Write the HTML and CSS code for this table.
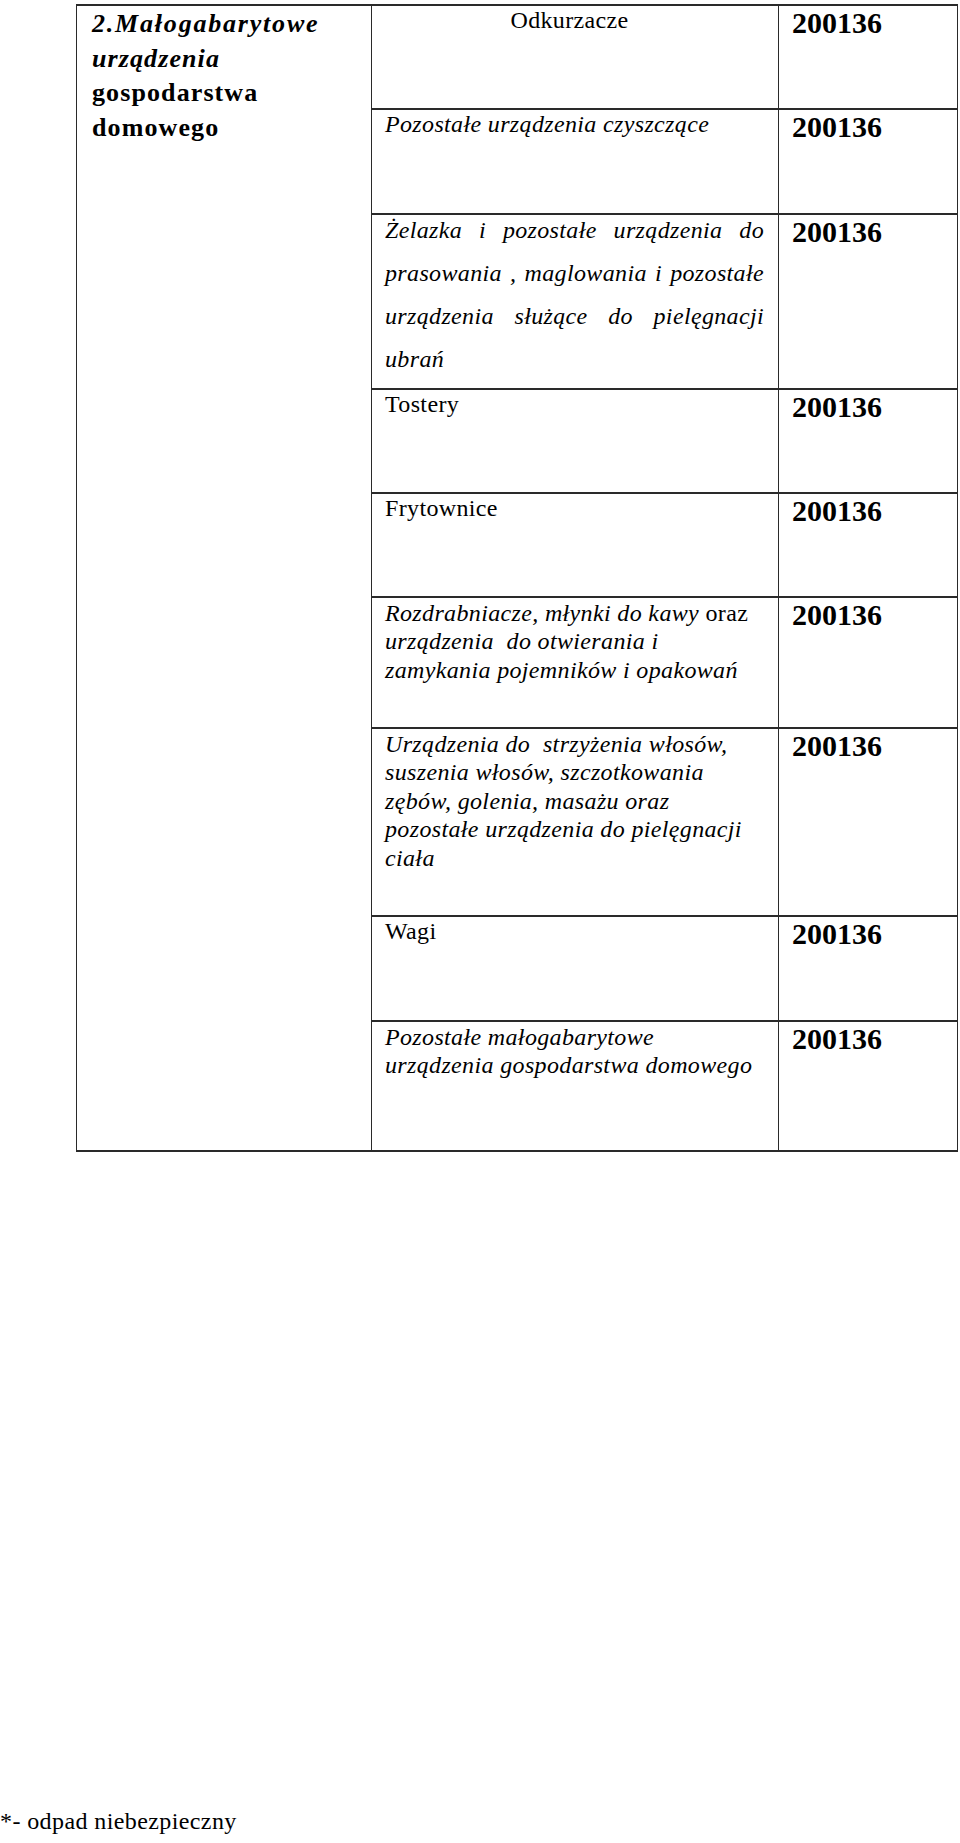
FILE: index.html
```html
<!DOCTYPE html>
<html lang="pl">
<head>
<meta charset="utf-8">
<title>Małogabarytowe urządzenia gospodarstwa domowego</title>
<link rel="stylesheet" href="styles.css">
</head>
<body>
<div class="page">
  <div class="sheet">
    <div class="cat">
      <em><span class="cat-lead">2.Małogabarytowe</span><br>urządzenia</em><br>
      gospodarstwa<br>domowego
    </div>

    <div class="name first center">Odkurzacze</div>
    <div class="code first">200136</div>

    <div class="name"><em>Pozostałe urządzenia czyszczące</em></div>
    <div class="code">200136</div>

    <div class="name just">
      <em class="jl">Żelazka i pozostałe urządzenia do</em>
      <em class="jl">prasowania , maglowania i pozostałe</em>
      <em class="jl">urządzenia służące do pielęgnacji</em>
      <em class="jl last">ubrań</em>
    </div>
    <div class="code">200136</div>

    <div class="name">Tostery</div>
    <div class="code">200136</div>

    <div class="name">Frytownice</div>
    <div class="code">200136</div>

    <div class="name tight"><em>Rozdrabniacze, młynki do kawy</em> oraz<br><em>urządzenia&nbsp; do otwierania i<br>zamykania pojemników i opakowań</em></div>
    <div class="code">200136</div>

    <div class="name tight"><em>Urządzenia do&nbsp; strzyżenia włosów,<br>suszenia włosów, szczotkowania<br>zębów, golenia, masażu oraz<br>pozostałe urządzenia do pielęgnacji<br>ciała</em></div>
    <div class="code">200136</div>

    <div class="name">Wagi</div>
    <div class="code">200136</div>

    <div class="name tight"><em>Pozostałe małogabarytowe<br>urządzenia gospodarstwa domowego</em></div>
    <div class="code">200136</div>
  </div>

  <p class="note">*- odpad niebezpieczny</p>
</div>
</body>
</html>
```

FILE: styles.css
```css
html, body {
  margin: 0;
  background: #ffffff;
  color: #000000;
  font-family: "Liberation Serif", "Times New Roman", serif;
}

.page {
  padding-top: 4px;
}

.sheet {
  display: grid;
  grid-template-columns: 294px 407px 179px;
  grid-template-rows: 102px 105px 175px 104px 104px 131px 188px 105px 130px;
  width: max-content;
  margin-left: 76px;
  border: 1px solid #2a2a2a;
  border-top-width: 2px;
  border-bottom-width: 2px;
}

.cat {
  grid-column: 1;
  grid-row: 1 / 10;
  padding: 1px 0 0 15px;
  font-size: 26px;
  font-weight: bold;
  line-height: 34.6px;
  letter-spacing: 1.1px;
}

.cat-lead {
  letter-spacing: 1.8px;
}

.name {
  grid-column: 2;
  border-left: 1px solid #2a2a2a;
  border-top: 2px solid #2a2a2a;
  padding: 1px 14px 0 13px;
  font-size: 24px;
  letter-spacing: 0.35px;
}

.code {
  grid-column: 3;
  border-left: 1px solid #2a2a2a;
  border-top: 2px solid #2a2a2a;
  padding: 0 0 0 13px;
  font-size: 30px;
  font-weight: bold;
}

.first {
  border-top: 0;
}

.center {
  text-align: center;
  padding-right: 24px;
}

.tight {
  line-height: 28.4px;
}

.just {
  display: flex;
  flex-direction: column;
  gap: 15px;
  line-height: 28px;
}

.jl {
  display: block;
  text-align: justify;
  text-align-last: justify;
}

.jl.last {
  text-align-last: left;
}

.note {
  margin: 656px 0 0 0;
  font-size: 24px;
  letter-spacing: 0.4px;
}
```
